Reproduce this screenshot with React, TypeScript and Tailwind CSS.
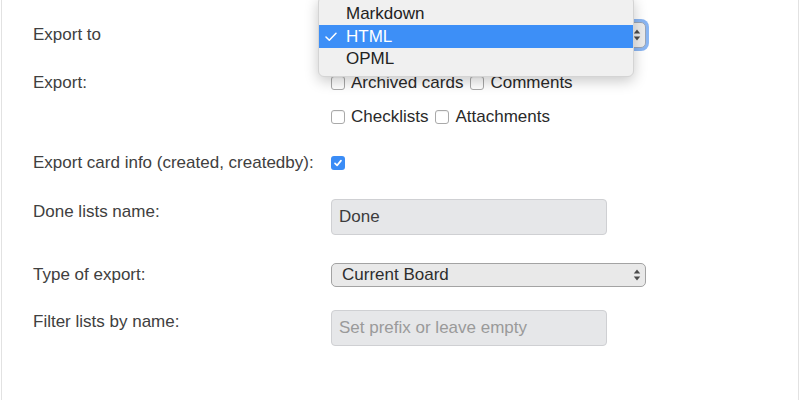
import React from "react";

function Box({ checked = false }: { checked?: boolean }) {
  if (checked) {
    return (
      <span className="flex h-[14px] w-[14px] shrink-0 items-center justify-center rounded-[3px] bg-[#3a8cf6]">
        <svg width="10" height="10" viewBox="0 0 10 10">
          <path d="M2 5.3 L4.1 7.4 L8 2.6" fill="none" stroke="#fff" strokeWidth="1.7" strokeLinecap="round" strokeLinejoin="round" />
        </svg>
      </span>
    );
  }
  return <span className="block h-[14px] w-[14px] shrink-0 rounded-[3px] border border-[#a9a9a9] bg-white shadow-[inset_0_1px_1px_rgba(0,0,0,0.06)]" />;
}

function Check({ label }: { label: string }) {
  return (
    <span className="flex items-center gap-[6px]">
      <Box />
      <span>{label}</span>
    </span>
  );
}

function Arrows() {
  return (
    <svg width="8" height="14" viewBox="0 0 8 14" className="shrink-0">
      <path d="M4 1.5 L7.2 5.6 L0.8 5.6 Z" fill="#4a4a4a" />
      <path d="M4 12.5 L7.2 8.4 L0.8 8.4 Z" fill="#4a4a4a" />
    </svg>
  );
}

export default function App() {
  const label = "w-[298px] shrink-0 text-[#404040]";
  return (
    <div
      className="relative h-[400px] w-[800px] overflow-hidden bg-white text-[17px]"
      style={{ fontFamily: '"Liberation Sans", Arial, sans-serif' }}
    >
      <div className="mx-px h-[400px] border-x border-[#e2e2e2] pl-[31px]">
        {/* Row 1 */}
        <div className="flex pt-[22px]">
          <div className={`${label} leading-[26px]`}>Export to</div>
          <div className="flex h-[26px] w-[315px] items-center justify-end rounded-[5px] border border-[#9aa6b8] bg-[#ececec] pr-[4px] shadow-[0_0_0_3px_#8ab6f3]">
            <Arrows />
          </div>
        </div>
        {/* Row 2 */}
        <div className="mt-[23px] flex">
          <div className={`${label} leading-[24px]`}>Export:</div>
          <div className="flex flex-col gap-[10px] leading-[24px] text-[#2a2a2a]">
            <div className="flex gap-[7px]">
              <Check label="Archived cards" />
              <Check label="Comments" />
            </div>
            <div className="flex gap-[7px]">
              <Check label="Checklists" />
              <Check label="Attachments" />
            </div>
          </div>
        </div>
        {/* Row 3 */}
        <div className="mt-[22px] flex items-center leading-[24px]">
          <div className={label}>Export card info (created, createdby):</div>
          <Box checked />
        </div>
        {/* Row 4 */}
        <div className="mt-[24px] flex">
          <div className={`${label} pt-px leading-[24px]`}>Done lists name:</div>
          <div className="flex h-[36px] w-[276px] items-center rounded-[4px] border border-[#cfd0d3] bg-[#e6e7e9] pl-[7px] text-[#3c3c3c]">
            Done
          </div>
        </div>
        {/* Row 5 */}
        <div className="mt-[28px] flex">
          <div className={`${label} leading-[24px]`}>Type of export:</div>
          <div className="flex h-[24px] w-[315px] items-center justify-between rounded-[5px] border border-[#a3a3a3] bg-[#e9e9e9] pl-[10px] pr-[4px] text-[#2e2e2e]">
            <span>Current Board</span>
            <Arrows />
          </div>
        </div>
        {/* Row 6 */}
        <div className="mt-[23px] flex">
          <div className={`${label} leading-[24px]`}>Filter lists by name:</div>
          <div className="flex h-[36px] w-[276px] items-center rounded-[4px] border border-[#cfd0d3] bg-[#e6e7e9] pl-[7px] text-[#9a9a9a]">
            Set prefix or leave empty
          </div>
        </div>
      </div>

      {/* Open dropdown menu */}
      <div className="absolute left-[318px] top-[-4px] w-[316px] rounded-[6px] border border-[#d4d4d4] bg-[#f0f0f0] pb-[6px] pt-[6px] text-[#222] shadow-[0_4px_14px_rgba(0,0,0,0.22)]">
        <div className="flex h-[22px] items-center pl-[27px]">Markdown</div>
        <div className="relative flex h-[23px] items-center bg-[#3d8ff7] pl-[27px] text-white">
          <svg width="12" height="10" viewBox="0 0 12 10" className="absolute left-[6px] top-[7px]">
            <path d="M1 5 L4.3 8.2 L11 1.3" fill="none" stroke="#fff" strokeWidth="1.5" strokeLinecap="round" strokeLinejoin="round" />
          </svg>
          HTML
        </div>
        <div className="flex h-[22px] items-center pl-[27px]">OPML</div>
      </div>
    </div>
  );
}
